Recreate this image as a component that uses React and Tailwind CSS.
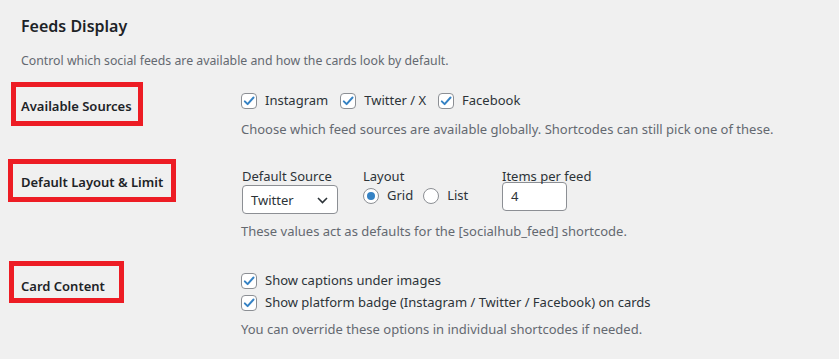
import { useState } from "react";

// WP-admin style settings section, with red annotation boxes over the row labels.
const FONT = "font-['Noto_Sans','Liberation_Sans',sans-serif]";

function Check({ checked = true }) {
  return (
    <span className="grid h-4 w-4 shrink-0 place-items-center rounded-[4px] border border-[#8c8f94] bg-white">
      {checked && (
        <svg width="14" height="14" viewBox="0 0 20 20" fill="none">
          <path d="M4 10.5l4 4L16.5 5" stroke="#3582c4" strokeWidth="2.8" strokeLinecap="round" strokeLinejoin="round" />
        </svg>
      )}
    </span>
  );
}

function CheckLabel({ children }) {
  return (
    <label className="flex h-5 items-center gap-2 text-[13px] text-[#2c3338]">
      <Check />
      <span>{children}</span>
    </label>
  );
}

function Radio({ checked }) {
  return (
    <span className="grid h-4 w-4 shrink-0 place-items-center rounded-full border border-[#8c8f94] bg-white">
      {checked && <span className="h-2 w-2 rounded-full bg-[#3582c4]" />}
    </span>
  );
}

function Desc({ children, className = "" }) {
  return <p className={`leading-5 text-[#646970] ${className}`}>{children}</p>;
}

const TH = "w-[220px] pt-[5px] text-[13px] font-semibold leading-5 text-[#1d2327]";

export default function App() {
  const [layout, setLayout] = useState("grid");

  return (
    <div className={`relative h-[359px] w-[839px] overflow-hidden bg-[#f0f0f0] pl-[21px] text-[13px] ${FONT}`}>
      <h2 className="mt-[15px] text-[16px] font-semibold leading-[22px] text-[#1d2327]">Feeds Display</h2>
      <Desc className="mt-[14px] text-[12.3px]">Control which social feeds are available and how the cards look by default.</Desc>

      {/* Available Sources */}
      <div className="mt-[20px] flex">
        <div className={TH}>Available Sources</div>
        <div>
          <div className="flex items-center gap-[12px]">
            <CheckLabel>Instagram</CheckLabel>
            <CheckLabel>Twitter / X</CheckLabel>
            <CheckLabel>Facebook</CheckLabel>
          </div>
          <Desc className="mt-2">Choose which feed sources are available globally. Shortcodes can still pick one of these.</Desc>
        </div>
      </div>

      {/* Default Layout & Limit */}
      <div className="mt-[28px] flex">
        <div className={TH}>Default Layout &amp; Limit</div>
        <div>
          <div className="flex text-[#2c3338]">
            <div className="w-[122px] pl-px">
              <div className="leading-[18px]">Default Source</div>
              <div className="flex h-[29px] w-[96px] items-center justify-between rounded-[4px] border border-[#8c8f94] bg-white pl-2 pr-[9px] pt-[2px]">
                <span>Twitter</span>
                <svg width="11" height="7" viewBox="0 0 11 7" fill="none">
                  <path d="M1 1l4.5 4.5L10 1" stroke="#2c3338" strokeWidth="1.6" />
                </svg>
              </div>
            </div>
            <div className="w-[139px]">
              <div className="leading-[18px]">Layout</div>
              <div className="flex h-[21px] items-center">
                <button onClick={() => setLayout("grid")} className="flex items-center gap-2">
                  <Radio checked={layout === "grid"} />
                  <span>Grid</span>
                </button>
                <button onClick={() => setLayout("list")} className="ml-[10px] flex items-center gap-2">
                  <Radio checked={layout === "list"} />
                  <span>List</span>
                </button>
              </div>
            </div>
            <div>
              <div className="leading-[18px]">Items per feed</div>
              <div className="-mt-[3px] flex h-[29px] w-[65px] items-center rounded-[4px] border border-[#8c8f94] bg-white pl-2">4</div>
            </div>
          </div>
          <Desc className="mt-[7px]">These values act as defaults for the [socialhub_feed] shortcode.</Desc>
        </div>
      </div>

      {/* Card Content */}
      <div className="mt-[30px] flex">
        <div className={TH}>Card Content</div>
        <div>
          <div className="flex flex-col gap-[2px]">
            <CheckLabel>Show captions under images</CheckLabel>
            <CheckLabel>Show platform badge (Instagram / Twitter / Facebook) on cards</CheckLabel>
          </div>
          <Desc className="mt-[6px]">You can override these options in individual shortcodes if needed.</Desc>
        </div>
      </div>

      {/* red annotation boxes */}
      <span className="pointer-events-none absolute left-[11px] top-[82px] h-[44px] w-[132px] border-[5px] border-[#ed1c24]" />
      <span className="pointer-events-none absolute left-[8px] top-[159px] h-[43px] w-[168px] border-[5px] border-[#ed1c24]" />
      <span className="pointer-events-none absolute left-[9px] top-[261px] h-[42px] w-[115px] border-[5px] border-[#ed1c24]" />
    </div>
  );
}
